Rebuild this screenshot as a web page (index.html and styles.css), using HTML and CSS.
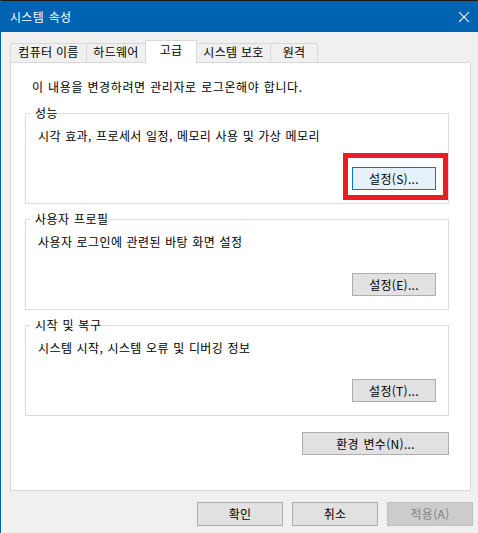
FILE: index.html
```html
<!DOCTYPE html>
<html lang="ko">
<head>
<meta charset="utf-8">
<title>시스템 속성</title>
<link rel="stylesheet" href="styles.css">
</head>
<body>
<div class="window">
  <div class="titlebar">
    <span class="title">시스템 속성</span>
    <svg class="close" width="10" height="10" viewBox="0 0 10 10" aria-hidden="true">
      <path d="M0 0 L10 10 M10 0 L0 10" stroke="#ffffff" stroke-width="1.1" fill="none"/>
    </svg>
  </div>
  <div class="tabs">
    <div class="tab tab-1">컴퓨터 이름</div>
    <div class="tab tab-2">하드웨어</div>
    <div class="tab tab-active">고급</div>
    <div class="tab tab-4">시스템 보호</div>
    <div class="tab tab-5">원격</div>
  </div>
  <div class="panel">
    <p class="intro">이 내용을 변경하려면 관리자로 로그온해야 합니다.</p>
    <fieldset class="group group-first">
      <legend>성능</legend>
      <p class="desc">시각 효과, 프로세서 일정, 메모리 사용 및 가상 메모리</p>
      <div class="actions">
        <span class="hl-wrap">
          <button class="btn btn-focus">설정(S)...</button>
          <span class="highlight"></span>
        </span>
      </div>
    </fieldset>
    <fieldset class="group">
      <legend>사용자 프로필</legend>
      <p class="desc">사용자 로그인에 관련된 바탕 화면 설정</p>
      <div class="actions">
        <button class="btn">설정(E)...</button>
      </div>
    </fieldset>
    <fieldset class="group">
      <legend>시작 및 복구</legend>
      <p class="desc">시스템 시작, 시스템 오류 및 디버깅 정보</p>
      <div class="actions">
        <button class="btn">설정(T)...</button>
      </div>
    </fieldset>
    <div class="env-row">
      <button class="btn btn-env">환경 변수(N)...</button>
    </div>
  </div>
  <div class="footer">
    <button class="btn btn-footer">확인</button>
    <button class="btn btn-footer">취소</button>
    <button class="btn btn-footer btn-disabled">적용(A)</button>
  </div>
</div>
</body>
</html>
```
FILE: styles.css
```css
html, body {
  margin: 0;
  padding: 0;
}

body {
  width: 478px;
  height: 533px;
  overflow: hidden;
  background: #f0f0f0;
  font-family: "Noto Sans CJK KR", "Noto Sans", sans-serif;
  font-size: 12px;
  line-height: 16px;
  color: #000000;
}

.window {
  height: 533px;
  box-sizing: border-box;
  border-left: 1px solid #0063b1;
}

.titlebar {
  height: 32px;
  box-sizing: border-box;
  border-top: 1px solid #1b1b1b;
  background: #0063b1;
  color: #ffffff;
  display: flex;
  align-items: center;
  padding: 0 9px 0 9px;
}

.title {
  letter-spacing: 0.3px;
  word-spacing: 1px;
}

.close {
  margin-left: auto;
  display: block;
}

.tabs {
  display: flex;
  align-items: flex-end;
  height: 22px;
  margin: 8px 0 0 9px;
}

.tab {
  box-sizing: border-box;
  height: 19px;
  border: 1px solid #d9d9d9;
  border-bottom: none;
  background: #f0f0f0;
  text-align: center;
  padding-bottom: 2px;
  white-space: nowrap;
  letter-spacing: 0.3px;
}

.tab-1 { width: 77px; }
.tab-2 { width: 60px; margin-left: -1px; }
.tab-4 { width: 75px; margin-left: -1px; }
.tab-5 { width: 48px; margin-left: -1px; }

.tab-active {
  width: 52px;
  height: 23px;
  margin-left: -1px;
  margin-bottom: -1px;
  padding: 1px 0 0 0;
  background: #ffffff;
  position: relative;
  z-index: 1;
}

.panel {
  width: 461px;
  height: 429px;
  margin-left: 9px;
  box-sizing: border-box;
  border: 1px solid #d9d9d9;
  background: #ffffff;
  padding-top: 16px;
}

.intro {
  margin: 0;
  padding-left: 21px;
  letter-spacing: 0.6px;
  word-spacing: 0.5px;
}

.group {
  margin: 7px 21px 0 14px;
  padding: 7px 12px 13px 0;
  border: 1px solid #dcdcdc;
  min-width: 0;
}

.group-first {
  margin-top: 10px;
}

.group legend {
  margin-left: 4px;
  padding: 0 1px 0 5px;
  line-height: 16px;
  letter-spacing: 0.5px;
  word-spacing: 0.5px;
}

.desc {
  margin: 0;
  padding-left: 12px;
  letter-spacing: 0.4px;
  word-spacing: 0.5px;
}

.actions {
  display: flex;
  justify-content: flex-end;
  margin-top: 23px;
}

.hl-wrap {
  position: relative;
  display: block;
}

.highlight {
  position: absolute;
  left: -9px;
  top: -14px;
  width: 105px;
  height: 47px;
  box-sizing: border-box;
  border: 5px solid #ed1c24;
}

.btn {
  display: block;
  box-sizing: border-box;
  width: 84px;
  height: 23px;
  margin: 0;
  padding: 0;
  border: 1px solid #adadad;
  background: #e1e1e1;
  font-family: inherit;
  font-size: 12px;
  line-height: 19px;
  color: #000000;
  text-align: center;
  letter-spacing: 0.3px;
  word-spacing: 1px;
}

.btn-focus {
  border-color: #0078d7;
  background: #e5f1fb;
}

.env-row {
  display: flex;
  justify-content: flex-end;
  margin: 16px 21px 0 0;
}

.btn-env {
  width: 147px;
}

.footer {
  display: flex;
  justify-content: flex-end;
  gap: 9px;
  margin-top: 11px;
  padding-right: 5px;
}

.btn-footer {
  width: 86px;
  height: 24px;
  line-height: 20px;
}

.btn-disabled {
  background: #cccccc;
  border-color: #bfbfbf;
  color: #838383;
}
```
